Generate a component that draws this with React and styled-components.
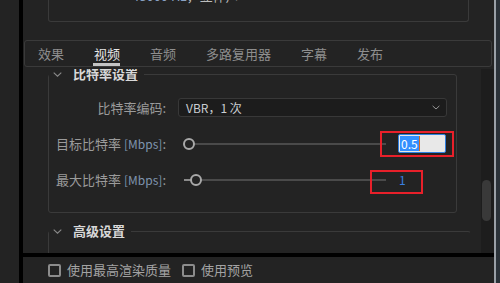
import React from 'react';
import styled, { createGlobalStyle } from 'styled-components';

const GlobalStyle = createGlobalStyle`
  html, body {
    margin: 0;
    padding: 0;
    background: #232323;
  }
  body {
    font-family: "Noto Sans CJK SC", "Noto Sans", sans-serif;
  }
`;

const Chevron = ({ size = 9, color = '#8a8a8a' }) => (
  <svg width={size} height={Math.round(size * 0.6)} viewBox="0 0 9 5" fill="none">
    <path d="M0.7 0.7 L4.5 4.2 L8.3 0.7" stroke={color} strokeWidth="1.1" />
  </svg>
);

const tabs = ['效果', '视频', '音频', '多路复用器', '字幕', '发布'];

const App = () => (
  <Frame>
    <GlobalStyle />
    <Gutter />
    <Divider />
    <Main>
      <TopArea>
        <AudioBox>
          <AudioInfo>
            <Hz>48000 Hz</Hz>，立体声
          </AudioInfo>
        </AudioBox>
        <TabBar>
          {tabs.map((t) => (
            <Tab key={t} $active={t === '视频'}>{t}</Tab>
          ))}
        </TabBar>
      </TopArea>

      <ScrollArea>
        <ScrollContent>
          <Scrolled>
            <Section $width={409}>
              <Legend>
                <Chevron />
                <SectionTitle>比特率设置</SectionTitle>
              </Legend>
              <Fields>
                <Label>比特率编码:</Label>
                <Select>
                  <span>VBR，1 次</span>
                  <Chevron size={8} color="#9a9a9a" />
                </Select>

                <Label>目标比特率 <Unit>[Mbps]</Unit>:</Label>
                <SliderRow>
                  <Track>
                    <Fill $width={0} />
                    <Thumb $left={-1} />
                  </Track>
                  <ValueCell>
                    <Input>
                      <Selected>0.5</Selected>
                      <Caret />
                    </Input>
                    <Annotation $left={-18} $top={-3} $w={74} $h={26} />
                  </ValueCell>
                </SliderRow>

                <Label>最大比特率 <Unit>[Mbps]</Unit>:</Label>
                <SliderRow>
                  <Track>
                    <Fill $width={7} />
                    <Thumb $left={6} />
                  </Track>
                  <ValueCell>
                    <LinkValue>1</LinkValue>
                    <Annotation $left={-28} $top={0} $w={53} $h={24} />
                  </ValueCell>
                </SliderRow>
              </Fields>
            </Section>

            <Section $width={423} $noRight $gap={10}>
              <Legend>
                <Chevron />
                <SectionTitle>高级设置</SectionTitle>
              </Legend>
              <Spacer />
            </Section>
          </Scrolled>
        </ScrollContent>
        <ScrollTrack>
          <ScrollThumb />
        </ScrollTrack>
      </ScrollArea>

      <BlackBar />

      <Footer>
        <CheckItem>
          <Box />
          使用最高渲染质量
        </CheckItem>
        <CheckItem>
          <Box />
          使用预览
        </CheckItem>
      </Footer>
    </Main>
    <RightEdge />
  </Frame>
);

export default App;

// region STYLES

const Frame = styled.div`
  display: flex;
  width: 500px;
  height: 283px;
  overflow: hidden;
  background: #232323;
`;

const Gutter = styled.div`
  width: 19px;
  flex: none;
`;

const Divider = styled.div`
  width: 4px;
  flex: none;
  background: #000;
`;

const Main = styled.div`
  width: 471px;
  flex: none;
  display: flex;
  flex-direction: column;
`;

const RightEdge = styled.div`
  flex: 1;
  background: #2b3239;
  border-left: 2px solid #9aa0a7;
`;

const TopArea = styled.div`
  height: 68px;
  flex: none;
  margin-bottom: 1px;
`;

const AudioBox = styled.div`
  box-sizing: border-box;
  margin-left: 25px;
  width: 421px;
  height: 22px;
  border: 1px solid #3a3a3a;
  border-top: none;
  border-radius: 0 0 3px 3px;
  overflow: hidden;
`;

const AudioInfo = styled.div`
  margin-top: -11px;
  padding-left: 83px;
  font-size: 13px;
  line-height: 13px;
  color: #bdbdbd;
`;

const Hz = styled.span`
  color: #8aa2c4;
`;

const TabBar = styled.div`
  box-sizing: border-box;
  margin: 18px 0 0 1px;
  width: 468px;
  height: 27px;
  border: 1px solid #3a3a3a;
  border-radius: 3px;
  display: flex;
  align-items: center;
  gap: 30px;
  padding-left: 13px;
`;

const Tab = styled.div`
  position: relative;
  font-size: 13px;
  line-height: 25px;
  color: ${(p) => (p.$active ? '#e6e6e6' : '#8e8e8e')};

  &::after {
    content: '';
    display: ${(p) => (p.$active ? 'block' : 'none')};
    position: absolute;
    left: -1px;
    right: 0;
    bottom: 0;
    height: 3px;
    background: #c4c4c4;
  }
`;

const ScrollArea = styled.div`
  height: 184px;
  flex: none;
  display: flex;
  overflow: hidden;
`;

const ScrollContent = styled.div`
  flex: 1;
  overflow: hidden;
`;

const Scrolled = styled.div`
  margin-top: -3px;
`;

const Section = styled.fieldset`
  box-sizing: border-box;
  width: ${(p) => p.$width}px;
  min-width: 0;
  margin: ${(p) => p.$gap || 0}px 0 0 25px;
  padding: 0;
  border: 1px solid #3a3a3a;
  border-right-color: ${(p) => (p.$noRight ? 'transparent' : '#3a3a3a')};
  border-radius: 3px;
`;

const Legend = styled.legend`
  display: flex;
  align-items: center;
  gap: 11px;
  padding: 0 6px 0 4px;
  height: 16px;
`;

const SectionTitle = styled.span`
  font-size: 13px;
  line-height: 16px;
  font-weight: 700;
  color: #d8d8d8;
`;

const Fields = styled.div`
  display: grid;
  grid-template-columns: 117px 269px;
  grid-auto-rows: 19px;
  column-gap: 12px;
  row-gap: 17px;
  align-items: center;
  padding: 16px 0 23px;
`;

const Label = styled.div`
  text-align: right;
  font-size: 13px;
  line-height: 19px;
  color: #9b9b9b;
  white-space: nowrap;
`;

const Unit = styled.span`
  font-size: 12px;
  color: #7f94ad;
`;

const Select = styled.div`
  box-sizing: border-box;
  height: 19px;
  border: 1px solid #383838;
  border-radius: 3px;
  background: #1c1c1c;
  display: flex;
  align-items: center;
  justify-content: space-between;
  padding: 0 6px 0 7px;
  font-size: 12px;
  color: #c9cdd2;
`;

const SliderRow = styled.div`
  display: flex;
  align-items: center;
  gap: 12px;
  padding-left: 6px;
  height: 19px;
`;

const Track = styled.div`
  position: relative;
  width: 202px;
  height: 2px;
  background: #4a4a4a;
`;

const Fill = styled.div`
  width: ${(p) => p.$width}px;
  height: 100%;
  background: #8a8a8a;
`;

const Thumb = styled.div`
  position: absolute;
  left: ${(p) => p.$left}px;
  top: -5px;
  box-sizing: border-box;
  width: 12px;
  height: 12px;
  border: 2px solid #a9a9a9;
  border-radius: 50%;
  background: #232323;
`;

const ValueCell = styled.div`
  position: relative;
  width: 48px;
  height: 19px;
  display: flex;
  align-items: center;
`;

const Input = styled.div`
  box-sizing: border-box;
  width: 48px;
  height: 19px;
  background: #e8e8e8;
  border: 1px solid #2f7fe0;
  border-radius: 2px;
  display: flex;
  align-items: center;
  padding-left: 1px;
`;

const Selected = styled.span`
  background: #3390ff;
  color: #fff;
  font-size: 12px;
  line-height: 15px;
  padding: 0 1px;
`;

const Caret = styled.span`
  width: 1px;
  height: 15px;
  background: #d8691e;
`;

const LinkValue = styled.span`
  padding-left: 1px;
  font-size: 12px;
  color: #3a7fe0;
`;

const Annotation = styled.div`
  position: absolute;
  left: ${(p) => p.$left}px;
  top: ${(p) => p.$top}px;
  width: ${(p) => p.$w}px;
  height: ${(p) => p.$h}px;
  box-sizing: border-box;
  border: 2px solid #e8202a;
  pointer-events: none;
`;

const Spacer = styled.div`
  height: 40px;
`;

const ScrollTrack = styled.div`
  width: 13px;
  flex: none;
  background: #1d1d1d;
`;

const ScrollThumb = styled.div`
  margin: 111px 0 0 1px;
  width: 9px;
  height: 41px;
  border-radius: 5px;
  background: #393939;
`;

const BlackBar = styled.div`
  height: 4px;
  flex: none;
  background: #000;
`;

const Footer = styled.div`
  flex: 1;
  display: flex;
  align-items: center;
  gap: 11px;
  padding-left: 25px;
`;

const CheckItem = styled.label`
  display: flex;
  align-items: center;
  gap: 6px;
  font-size: 13px;
  line-height: 16px;
  color: #a3a3a3;
`;

const Box = styled.span`
  box-sizing: border-box;
  width: 13px;
  height: 13px;
  border: 2px solid #8c8c8c;
  border-radius: 2px;
`;

// endregion
